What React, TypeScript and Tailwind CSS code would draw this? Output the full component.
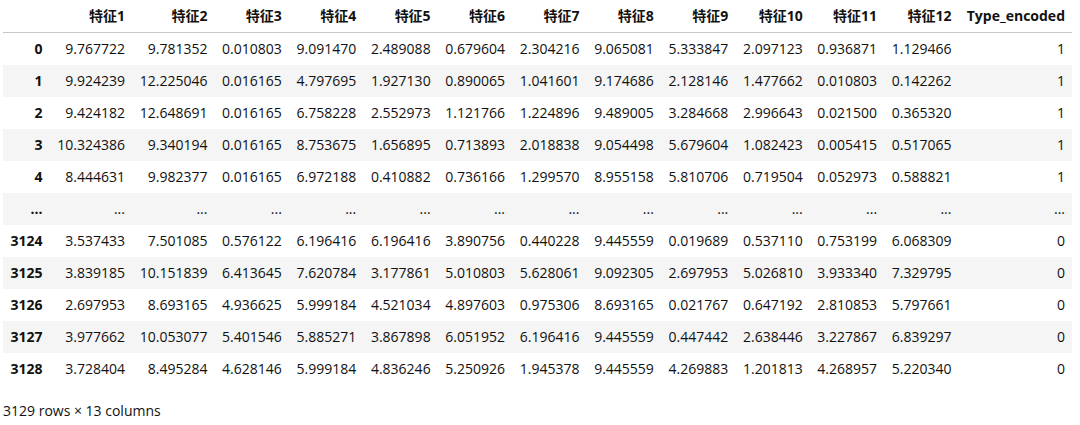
const columns = [
  "特征1", "特征2", "特征3", "特征4", "特征5", "特征6",
  "特征7", "特征8", "特征9", "特征10", "特征11", "特征12", "Type_encoded",
]

const rows: [string, string[]][] = [
  ["0", ["9.767722", "9.781352", "0.010803", "9.091470", "2.489088", "0.679604", "2.304216", "9.065081", "5.333847", "2.097123", "0.936871", "1.129466", "1"]],
  ["1", ["9.924239", "12.225046", "0.016165", "4.797695", "1.927130", "0.890065", "1.041601", "9.174686", "2.128146", "1.477662", "0.010803", "0.142262", "1"]],
  ["2", ["9.424182", "12.648691", "0.016165", "6.758228", "2.552973", "1.121766", "1.224896", "9.489005", "3.284668", "2.996643", "0.021500", "0.365320", "1"]],
  ["3", ["10.324386", "9.340194", "0.016165", "8.753675", "1.656895", "0.713893", "2.018838", "9.054498", "5.679604", "1.082423", "0.005415", "0.517065", "1"]],
  ["4", ["8.444631", "9.982377", "0.016165", "6.972188", "0.410882", "0.736166", "1.299570", "8.955158", "5.810706", "0.719504", "0.052973", "0.588821", "1"]],
  ["...", Array(13).fill("...")],
  ["3124", ["3.537433", "7.501085", "0.576122", "6.196416", "6.196416", "3.890756", "0.440228", "9.445559", "0.019689", "0.537110", "0.753199", "6.068309", "0"]],
  ["3125", ["3.839185", "10.151839", "6.413645", "7.620784", "3.177861", "5.010803", "5.628061", "9.092305", "2.697953", "5.026810", "3.933340", "7.329795", "0"]],
  ["3126", ["2.697953", "8.693165", "4.936625", "5.999184", "4.521034", "4.897603", "0.975306", "8.693165", "0.021767", "0.647192", "2.810853", "5.797661", "0"]],
  ["3127", ["3.977662", "10.053077", "5.401546", "5.885271", "3.867898", "6.051952", "6.196416", "9.445559", "0.447442", "2.638446", "3.227867", "6.839297", "0"]],
  ["3128", ["3.728404", "8.495284", "4.628146", "5.999184", "4.836246", "5.250926", "1.945378", "9.445559", "4.269883", "1.201813", "4.268957", "5.220340", "0"]],
]

export default function App() {
  return (
    <div className="min-h-[425px] w-[1080px] bg-white pl-[3px] text-[14px] leading-[18px] text-[#111] [font-family:'Open_Sans','Noto_Sans_CJK_SC',sans-serif]">
      <table className="w-[1069px] border-collapse">
        <thead>
          <tr className="border-b border-[#c6c6c6]">
            <th className="px-[7px] py-[7px]" />
            {columns.map((c) => (
              <th key={c} className="whitespace-nowrap px-[7px] py-[7px] text-right font-bold">
                {c}
              </th>
            ))}
          </tr>
        </thead>
        <tbody>
          {rows.map(([idx, vals], i) => (
            <tr key={idx} className={i % 2 === 1 ? "bg-[#f5f5f5]" : "bg-white"}>
              <th className="whitespace-nowrap px-[7px] py-[7px] text-right font-bold">{idx}</th>
              {vals.map((v, j) => (
                <td key={j} className="whitespace-nowrap px-[7px] py-[7px] text-right">
                  {v}
                </td>
              ))}
            </tr>
          ))}
        </tbody>
      </table>
      <p className="mt-[17px]">3129 rows × 13 columns</p>
    </div>
  )
}
